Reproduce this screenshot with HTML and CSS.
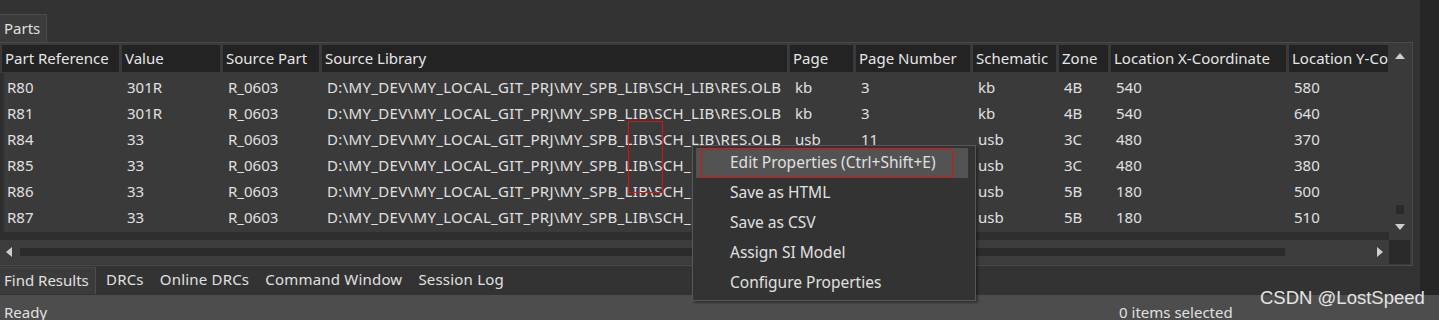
FILE: index.html
```html
<!DOCTYPE html>
<html>
<head>
	<meta charset="utf-8">
	<title>Parts</title>
	<link rel="stylesheet" href="styles.css">
</head>
<body>
	<div class="window">
		<div class="main">
			<div class="left">
				<div class="toptabs">
					<div class="tab active">Parts</div>
				</div>
				<div class="panel">
					<div class="view">
						<div class="grid head">
							<div class="hcell">Part Reference</div>
							<div class="hcell">Value</div>
							<div class="hcell">Source Part</div>
							<div class="hcell">Source Library</div>
							<div class="hcell">Page</div>
							<div class="hcell">Page Number</div>
							<div class="hcell">Schematic</div>
							<div class="hcell">Zone</div>
							<div class="hcell">Location X-Coordinate</div>
							<div class="hcell">Location Y-Coordinate</div>
						</div>
						<div class="rows">
							<div class="grid row">
								<div>R80</div><div>301R</div><div>R_0603</div><div>D:\MY_DEV\MY_LOCAL_GIT_PRJ\MY_SPB_LIB\SCH_LIB\RES.OLB</div><div>kb</div><div>3</div><div>kb</div><div>4B</div><div>540</div><div>580</div>
							</div>
							<div class="grid row">
								<div>R81</div><div>301R</div><div>R_0603</div><div>D:\MY_DEV\MY_LOCAL_GIT_PRJ\MY_SPB_LIB\SCH_LIB\RES.OLB</div><div>kb</div><div>3</div><div>kb</div><div>4B</div><div>540</div><div>640</div>
							</div>
							<div class="grid row">
								<div>R84</div><div>33</div><div>R_0603</div><div>D:\MY_DEV\MY_LOCAL_GIT_PRJ\MY_SPB_LIB\SCH_LIB\RES.OLB</div><div>usb</div><div>11</div><div>usb</div><div>3C</div><div>480</div><div>370</div>
							</div>
							<div class="grid row">
								<div>R85</div><div>33</div><div>R_0603</div><div>D:\MY_DEV\MY_LOCAL_GIT_PRJ\MY_SPB_LIB\SCH_LIB\RES.OLB</div><div>usb</div><div>11</div><div>usb</div><div>3C</div><div>480</div><div>380</div>
							</div>
							<div class="grid row">
								<div>R86</div><div>33</div><div>R_0603</div><div>D:\MY_DEV\MY_LOCAL_GIT_PRJ\MY_SPB_LIB\SCH_LIB\RES.OLB</div><div>usb</div><div>11</div><div>usb</div><div>5B</div><div>180</div><div>500</div>
							</div>
							<div class="grid row">
								<div>R87</div><div>33</div><div>R_0603</div><div>D:\MY_DEV\MY_LOCAL_GIT_PRJ\MY_SPB_LIB\SCH_LIB\RES.OLB</div><div>usb</div><div>11</div><div>usb</div><div>5B</div><div>180</div><div>510</div>
							</div>
							<div class="rowtail"></div>
						</div>
					</div>
					<div class="vscroll">
						<span class="arrow up"></span>
						<span class="thumb"></span>
						<span class="arrow down"></span>
					</div>
					<div class="hscroll">
						<span class="arrow lft"></span>
						<span class="track"></span>
						<span class="arrow rgt"></span>
					</div>
					<div class="corner"></div>
				</div>
				<div class="bottomtabs">
					<div class="tab active">Find Results</div>
					<div class="tab">DRCs</div>
					<div class="tab">Online DRCs</div>
					<div class="tab">Command Window</div>
					<div class="tab">Session Log</div>
				</div>
			</div>
			<div class="side"></div>
		</div>
		<div class="status">
			<span class="ready">Ready</span>
			<span class="count">0 items selected</span>
		</div>

		<div class="mark mark-a"></div>

		<ul class="menu">
			<li class="hot">Edit Properties (Ctrl+Shift+E)</li>
			<li>Save as HTML</li>
			<li>Save as CSV</li>
			<li>Assign SI Model</li>
			<li>Configure Properties</li>
		</ul>
		<div class="mark mark-b"></div>

		<div class="watermark">CSDN @LostSpeed</div>
	</div>
</body>
</html>
```
FILE: styles.css
```css
/* fonts */
body {
	font-family: "Noto Sans", "Open Sans", sans-serif;
	font-size: 15px;
	color: #e0e0e0;
}

.row div:nth-child(4) {
	letter-spacing: 0.33px;
}

.bottomtabs .tab {
	letter-spacing: 0.2px;
}

/* layout */
body {
	margin: 0;
	width: 1439px;
	height: 320px;
	overflow: hidden;
	background-color: #333;
}

.window {
	position: relative;
	height: 320px;
	display: flex;
	flex-direction: column;
}

.main {
	display: flex;
	height: 295px;
}

.left {
	width: 1420px;
	display: flex;
	flex-direction: column;
}

.side {
	flex: 1;
	background-color: #262626;
}

.toptabs {
	display: flex;
	padding-top: 14px;
	height: 28px;
}

.toptabs .tab {
	width: 42px;
	padding-left: 4px;
	line-height: 27px;
	background-color: #3b3b3b;
	border-top: 1px solid #4b4b4b;
	border-right: 1px solid #4b4b4b;
}

.panel {
	width: 1412px;
	height: 223px;
	display: grid;
	grid-template-columns: 1389px 21px;
	grid-template-rows: 197px 24px;
	background-color: #3a3a3a;
	border-top: 1px solid #4a4a4a;
	border-right: 1px solid #4a4a4a;
	border-bottom: 1px solid #4a4a4a;
}

.view {
	overflow: hidden;
}

.grid {
	display: grid;
	grid-template-columns: 120px 101px 99px 468px 66px 117px 86px 52px 178px 102px;
}

.head {
	height: 30px;
	padding-top: 2px;
	box-sizing: border-box;
}

.hcell {
	margin: 0 1px 0 2px;
	padding-left: 3px;
	height: 27px;
	line-height: 27px;
	background-color: #232323;
	white-space: nowrap;
	overflow: hidden;
	color: #e6e6e6;
}

.rows {
	border-left: 4px solid #2f2f2f;
}

.row {
	height: 26px;
	line-height: 28px;
	margin-left: -4px;
}

.row div {
	padding-left: 7px;
	white-space: nowrap;
	overflow: hidden;
}

.rowtail {
	height: 11px;
	margin-top: 3px;
	margin-left: -4px;
	background-color: #2e2e2e;
}

.vscroll {
	display: flex;
	flex-direction: column;
	align-items: center;
	padding-top: 10px;
}

.thumb {
	width: 8px;
	height: 9px;
	margin-top: 146px;
	background-color: #2a2a2a;
}

.arrow {
	width: 0;
	height: 0;
	border: 5px solid transparent;
}

.arrow.up {
	border-top: 0;
	border-bottom: 6px solid #cfcfcf;
}

.arrow.down {
	margin-top: 10px;
	border-bottom: 0;
	border-top: 6px solid #cfcfcf;
}

.hscroll {
	display: flex;
	align-items: center;
	padding: 0 6px;
	gap: 8px;
	background-color: #3c3c3c;
}

.arrow.lft {
	border-left: 0;
	border-right: 6px solid #cfcfcf;
}

.arrow.rgt {
	margin-left: auto;
	border-right: 0;
	border-left: 6px solid #cfcfcf;
}

.track {
	width: 1265px;
	height: 8px;
	background-color: #2b2b2b;
}

.corner {
	background-color: #2a2a2a;
}

.bottomtabs {
	display: flex;
	height: 28px;
	padding-top: 1px;
}

.bottomtabs .tab {
	padding: 0 8px;
	line-height: 24px;
	height: 26px;
}

.bottomtabs .tab.active {
	width: 91px;
	padding: 0 0 0 4px;
	background-color: #3b3b3b;
	border-top: 1px solid #474747;
	border-right: 1px solid #4d4d4d;
	margin-right: 2px;
	letter-spacing: 0;
}

.status {
	flex: 1;
	display: flex;
	background-color: #4d4d4d;
	line-height: 20px;
	padding-top: 7px;
}

.status .ready {
	padding-left: 4px;
}

.status .count {
	margin-left: 1072px;
}

/* overlays */
.menu {
	position: absolute;
	left: 692px;
	top: 145px;
	width: 279px;
	margin: 0;
	padding: 2px 0 2px 3px;
	list-style: none;
	background-color: #333;
	border: 1px solid #575757;
	box-shadow: 2px 2px 2px rgba(0, 0, 0, 0.35);
	font-size: 15.5px;
}

.menu li {
	width: 272px;
	height: 30px;
	line-height: 29px;
	padding-left: 34px;
	box-sizing: border-box;
	white-space: nowrap;
}

.menu li.hot {
	background-color: #535353;
}

.mark {
	position: absolute;
	border: 1px solid #e01010;
}

.mark-a {
	left: 628px;
	top: 121px;
	width: 33px;
	height: 70px;
}

.mark-b {
	left: 701px;
	top: 149px;
	width: 250px;
	height: 27px;
}

.watermark {
	position: absolute;
	left: 1260px;
	top: 287px;
	font-family: "Liberation Sans", Arial, sans-serif;
	font-size: 18.5px;
	color: #e4e4e4;
}
```
